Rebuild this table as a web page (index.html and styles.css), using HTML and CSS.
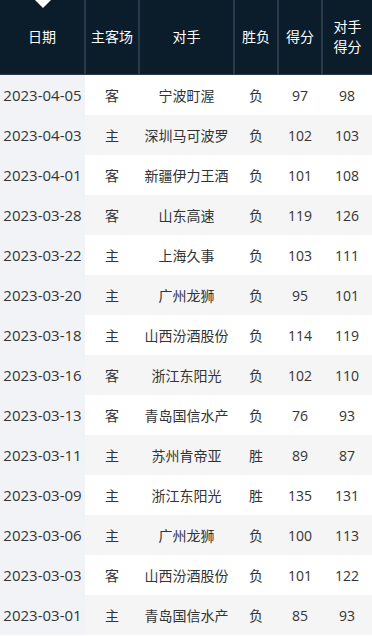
FILE: index.html
```html
<!DOCTYPE html>
<html lang="zh">
<head>
<meta charset="utf-8">
<link rel="stylesheet" href="styles.css">
</head>
<body>
<table class="games">
  <colgroup>
    <col class="c-date"><col class="c-home"><col class="c-opp"><col class="c-res"><col class="c-score"><col class="c-oscore">
  </colgroup>
  <thead>
    <tr>
      <th class="date-h"><span class="caret"></span>日期</th>
      <th>主客场</th>
      <th>对手</th>
      <th>胜负</th>
      <th>得分</th>
      <th>对手<br>得分</th>
    </tr>
  </thead>
  <tbody>
    <tr><td class="date">2023-04-05</td><td>客</td><td>宁波町渥</td><td>负</td><td>97</td><td>98</td></tr>
    <tr><td class="date">2023-04-03</td><td>主</td><td>深圳马可波罗</td><td>负</td><td>102</td><td>103</td></tr>
    <tr><td class="date">2023-04-01</td><td>客</td><td>新疆伊力王酒</td><td>负</td><td>101</td><td>108</td></tr>
    <tr><td class="date">2023-03-28</td><td>客</td><td>山东高速</td><td>负</td><td>119</td><td>126</td></tr>
    <tr><td class="date">2023-03-22</td><td>主</td><td>上海久事</td><td>负</td><td>103</td><td>111</td></tr>
    <tr><td class="date">2023-03-20</td><td>主</td><td>广州龙狮</td><td>负</td><td>95</td><td>101</td></tr>
    <tr><td class="date">2023-03-18</td><td>主</td><td>山西汾酒股份</td><td>负</td><td>114</td><td>119</td></tr>
    <tr><td class="date">2023-03-16</td><td>客</td><td>浙江东阳光</td><td>负</td><td>102</td><td>110</td></tr>
    <tr><td class="date">2023-03-13</td><td>客</td><td>青岛国信水产</td><td>负</td><td>76</td><td>93</td></tr>
    <tr><td class="date">2023-03-11</td><td>主</td><td>苏州肯帝亚</td><td>胜</td><td>89</td><td>87</td></tr>
    <tr><td class="date">2023-03-09</td><td>主</td><td>浙江东阳光</td><td>胜</td><td>135</td><td>131</td></tr>
    <tr><td class="date">2023-03-06</td><td>主</td><td>广州龙狮</td><td>负</td><td>100</td><td>113</td></tr>
    <tr><td class="date">2023-03-03</td><td>客</td><td>山西汾酒股份</td><td>负</td><td>101</td><td>122</td></tr>
    <tr><td class="date">2023-03-01</td><td>主</td><td>青岛国信水产</td><td>负</td><td>85</td><td>93</td></tr>
  </tbody>
</table>
</body>
</html>
```

FILE: styles.css
```css
html, body {
  margin: 0;
  padding: 0;
  background: #ffffff;
}

body {
  font-family: "Open Sans", "Noto Sans CJK SC", sans-serif;
  color: #333333;
}

.games {
  width: 372px;
  border-collapse: collapse;
  table-layout: fixed;
}

.c-date { width: 85px; }
.c-home { width: 54px; }
.c-opp { width: 95px; }
.c-res { width: 44px; }
.c-score { width: 44px; }
.c-oscore { width: 50px; }

.games thead th {
  height: 74px;
  padding: 0;
  background: #0b1c2b;
  color: #ffffff;
  font-weight: normal;
  font-size: 14px;
  line-height: 20px;
  text-align: center;
  border-left: 2px solid #2a3b4c;
  border-bottom: 1px solid #2a3b4c;
}

.games thead th:first-child {
  border-left: none;
}

.date-h {
  position: relative;
}

.caret {
  position: absolute;
  top: 0;
  left: 35px;
  width: 0;
  height: 0;
  border-left: 8px solid transparent;
  border-right: 8px solid transparent;
  border-top: 8px solid #ffffff;
}

.games tbody td {
  height: 40px;
  padding: 0;
  font-size: 14px;
  text-align: center;
  white-space: nowrap;
}

.games tbody tr:nth-child(even) td {
  background: #f5f5f5;
}

.games tbody td.date {
  background: #f2f3f7;
  font-size: 15px;
}

.games tbody tr:nth-child(even) td.date {
  background: #f2f3f7;
}
```
